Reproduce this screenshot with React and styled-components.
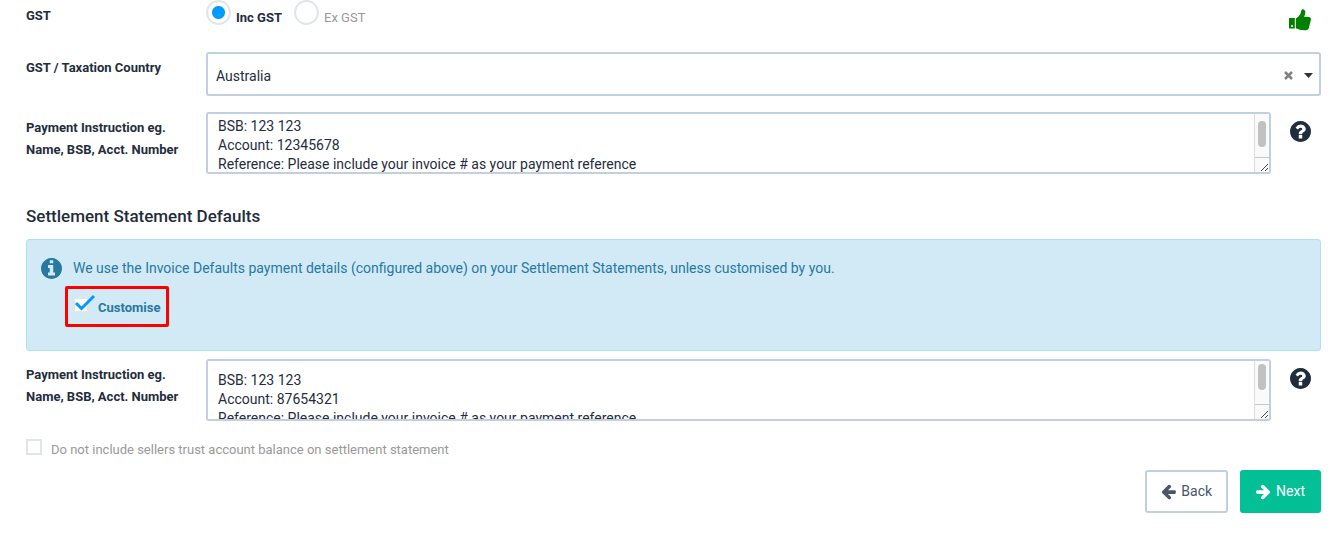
import React, { useLayoutEffect, useRef } from "react";
import styled, { createGlobalStyle, css } from "styled-components";

const ink = "#1f2d3d";
const line = "#c1cfde";
const blue = "#009bff";

const GlobalStyle = createGlobalStyle`
  *, *::before, *::after { box-sizing: border-box; }
  body {
    margin: 0;
    background: #fff;
    color: ${ink};
    font: 14px/19px Roboto, "Liberation Sans", sans-serif;
  }
  button, input, select, textarea { margin: 0; font: inherit; color: inherit; }
`;

const Form = styled.form`
  display: flex;
  flex-direction: column;
  padding: 0 23px 20px 26px;
`;

const Row = styled.div`
  display: grid;
  grid-template-columns: 180px 1fr ${(p) => (p.$aside ? "50px" : "")};
  margin-bottom: ${(p) => p.$gap || 0}px;
`;

const labelText = css`
  font-size: 13px;
  font-weight: 700;
  line-height: 22px;
`;

const Label = styled.label`
  ${labelText}
  padding-top: 5px;
`;

const Aside = styled.div`
  display: flex;
  justify-content: flex-end;
  align-items: flex-start;
  padding: 9px 10px 0 0;
`;

const IconButton = styled.button`
  display: flex;
  padding: 0;
  border: 0;
  background: none;
  cursor: pointer;
`;

const RadioGroup = styled.div`
  display: flex;
  gap: 12px;
`;

const RadioLabel = styled.label`
  display: flex;
  gap: 5px;
  font-size: 13px;
  line-height: 36px;
  height: 26px;
  color: ${(p) => (p.$on ? ink : "#999")};
  font-weight: ${(p) => (p.$on ? 700 : 400)};
`;

const Radio = styled.input`
  appearance: none;
  width: 25px;
  height: 25px;
  border: 2px solid #e0e6e8;
  border-radius: 50%;
  background: #fff;
  &:checked {
    background: radial-gradient(circle, ${blue} 6px, #fff 7px);
  }
`;

const SelectBox = styled.div`
  display: flex;
  align-items: center;
  height: 44px;
  padding: 2px 6px 0 0;
  border: 2px solid ${line};
  border-radius: 3px;
`;

const Select = styled.select`
  appearance: none;
  flex: 1;
  align-self: stretch;
  padding: 2px 8px 0;
  border: 0;
  background: none;
`;

const ClearButton = styled(IconButton)`
  margin-right: 11px;
`;

const ScrollField = styled.div`
  position: relative;
`;

const TextArea = styled.textarea`
  display: block;
  width: 100%;
  height: 62px;
  padding: 10px;
  border: 2px solid ${line};
  border-radius: 3px;
  resize: none;
  background: #fff;
  scrollbar-width: none;
`;

const ScrollTrack = styled.div`
  position: absolute;
  top: 2px;
  right: 2px;
  bottom: 2px;
  width: 15px;
  display: flex;
  flex-direction: column;
  justify-content: space-between;
  border-left: 1px solid #dcdcdc;
  background: #fafafa;
  pointer-events: none;
`;

const ScrollThumb = styled.div`
  width: 8px;
  height: 26px;
  margin: ${(p) => (p.$moved ? 7 : 3)}px 0 0 3px;
  border-radius: 4px;
  background: #c1c1c1;
`;

const Heading = styled.h2`
  margin: 30px 0 11px;
  font-size: 17px;
  font-weight: 500;
  line-height: 24px;
`;

const Notice = styled.section`
  display: flex;
  align-items: flex-start;
  gap: 11px;
  min-height: 112px;
  margin-bottom: 8px;
  padding: 18px 14px;
  border: 1px solid #aee3ec;
  border-radius: 3px;
  background: #d2eaf5;
  color: #2779a0;
`;

const NoticeBody = styled.div`
  display: flex;
  flex-direction: column;
  align-items: flex-start;
`;

const NoticeText = styled.p`
  margin: 0;
  line-height: 20px;
`;

const Customise = styled.label`
  ${labelText}
  position: relative;
  display: flex;
  align-items: center;
  height: 41px;
  margin: 8px 0 0 -8px;
  padding: 0 6px 5px 5px;
  gap: 3px;
  border: 3px solid #fe0000;
  border-radius: 2px;
`;

const HiddenCheck = styled.input`
  position: absolute;
  opacity: 0;
`;

const CustomiseText = styled.span`
  padding-top: 8px;
`;

const OptOut = styled.label`
  display: flex;
  gap: 9px;
  margin: 18px 0 9px;
  font-size: 13px;
  line-height: 22px;
  color: #999;
`;

const Check = styled.input`
  appearance: none;
  width: 16px;
  height: 16px;
  border: 2px solid #e0e6e8;
  background: #fff;
`;

const Actions = styled.div`
  display: flex;
  justify-content: flex-end;
  gap: 12px;
`;

const Button = styled.button`
  display: flex;
  align-items: center;
  gap: 5px;
  height: 43px;
  padding: 0 14px;
  border: 2px solid ${(p) => (p.$primary ? "#03bf95" : line)};
  border-radius: 3px;
  background: ${(p) => (p.$primary ? "#03bf95" : "#fff")};
  color: ${(p) => (p.$primary ? "#fff" : "#475669")};
  cursor: pointer;
`;

const ThumbIcon = () => (
  <svg width="22" height="22" viewBox="0 0 22 22" role="img" aria-label="Complete">
    <path
      fill="#008000"
      fillRule="evenodd"
      d="M0 9H5.800V19.500H0ZM3 16A1 1 0 1 0 3 18A1 1 0 1 0 3 16ZM6.800 9.500C9.500 8 11.700 5.500 12.200 2C12.500-.5 16-.4 16.300 2.800C16.400 5 15.500 6.500 15 7.700L20 8C21.800 8.200 22.200 9.600 21.700 11.500L20 18.500C19.600 20.500 18 21.300 15.800 21.300C12 21.300 9.500 20.500 6.800 19.300Z"
    />
  </svg>
);

const QuestionIcon = () => (
  <svg width="21" height="21" viewBox="0 0 1536 1536" aria-hidden="true">
    <path fill={ink} d="M896 1248v-192q0-14-9-23t-23-9H672q-14 0-23 9t-9 23v192q0 14 9 23t23 9h192q14 0 23-9t9-23zm256-672q0-88-55.500-163T958 297t-170-41q-243 0-371 213-15 24 8 42l132 100q7 6 19 6 16 0 25-12 53-68 86-92 34-24 86-24 48 0 85.500 26t37.500 59q0 38-20 61t-68 45q-63 28-115.500 86.500T640 892v36q0 14 9 23t23 9h192q14 0 23-9t9-23q0-19 21.500-49.500T972 829q32-18 49-28.500t46-35 44.500-48 28-60.500 12.500-81zm384 192q0 209-103 385.500T1153.500 1433 768 1536t-385.500-103T103 1153.500 0 768t103-385.500T382.500 103 768 0t385.500 103T1433 382.500 1536 768z" />
  </svg>
);

const InfoIcon = () => (
  <svg width="21" height="21" viewBox="0 0 1536 1536" aria-hidden="true">
    <path fill="currentColor" d="M1024 1248v-160q0-14-9-23t-23-9h-96V544q0-14-9-23t-23-9H544q-14 0-23 9t-9 23v160q0 14 9 23t23 9h96v320h-96q-14 0-23 9t-9 23v160q0 14 9 23t23 9h448q14 0 23-9t9-23zM896 352V192q0-14-9-23t-23-9H672q-14 0-23 9t-9 23v160q0 14 9 23t23 9h192q14 0 23-9t9-23zm640 416q0 209-103 385.500T1153.500 1433 768 1536t-385.500-103T103 1153.500 0 768t103-385.500T382.500 103 768 0t385.500 103T1433 382.500 1536 768z" />
  </svg>
);

const ArrowIcon = ({ right }) => (
  <svg width="15" height="16" viewBox="-20 -90 1576 1576" aria-hidden="true">
    <path
      transform={right ? "matrix(-1 0 0 1 1536 0)" : undefined}
      fill="currentColor"
      d="M1536 640v128q0 53-32.500 90.500t-84.500 37.500h-704l293 294q38 36 38 90t-38 90l-75 76q-37 37-90 37-52 0-91-37l-651-652q-37-37-37-90 0-52 37-91l651-650q38-38 91-38 52 0 90 38l75 74q38 38 38 91t-38 91l-293 293h704q52 0 84.500 37.500t32.500 90.500z"
    />
  </svg>
);

const ResizeGrip = () => (
  <svg width="14" height="15" viewBox="0 0 14 15" aria-hidden="true">
    <path d="M0 .5H14" stroke="#c8c8c8" />
    <path d="M6 14L13 7M10 14L13 11" stroke="#444" />
  </svg>
);

function Instructions({ id, value, scroll = 0 }) {
  const ref = useRef(null);
  useLayoutEffect(() => {
    ref.current.scrollTop = scroll;
  }, [scroll]);
  return (
    <Row $aside>
      <Label htmlFor={id}>
        Payment Instruction eg.
        <br />
        Name, BSB, Acct. Number
      </Label>
      <ScrollField>
        <TextArea id={id} ref={ref} defaultValue={value} />
        <ScrollTrack>
          <ScrollThumb $moved={scroll > 0} />
          <ResizeGrip />
        </ScrollTrack>
      </ScrollField>
      <Aside>
        <IconButton type="button" aria-label="Help">
          <QuestionIcon />
        </IconButton>
      </Aside>
    </Row>
  );
}

export default function App() {
  return (
    <>
      <GlobalStyle />
      <Form onSubmit={(e) => e.preventDefault()}>
        <Row $aside $gap={21}>
          <Label as="span">GST</Label>
          <RadioGroup role="radiogroup" aria-label="GST">
            <RadioLabel $on>
              <Radio type="radio" name="gst" defaultChecked />
              Inc GST
            </RadioLabel>
            <RadioLabel>
              <Radio type="radio" name="gst" />
              Ex GST
            </RadioLabel>
          </RadioGroup>
          <Aside>
            <ThumbIcon />
          </Aside>
        </Row>
        <Row $gap={16}>
          <Label htmlFor="country">GST / Taxation Country</Label>
          <SelectBox>
            <Select id="country" defaultValue="Australia">
              <option>Australia</option>
            </Select>
            <ClearButton type="button" aria-label="Clear country">
              <svg width="9" height="9" viewBox="0 0 9 9">
                <path d="M1 1L8 8M8 1L1 8" stroke="#808080" strokeWidth="2.500" />
              </svg>
            </ClearButton>
            <svg width="9" height="5" viewBox="0 0 9 5" aria-hidden="true">
              <path d="M0 0H9L4.500 5Z" fill="#333" />
            </svg>
          </SelectBox>
        </Row>
        <Instructions
          id="invoice-payment"
          scroll={7}
          value={"BSB: 123 123\nAccount: 12345678\nReference: Please include your invoice # as your payment reference\n"}
        />
        <Heading>Settlement Statement Defaults</Heading>
        <Notice>
          <InfoIcon />
          <NoticeBody>
            <NoticeText>
              We use the Invoice Defaults payment details (configured above) on your Settlement Statements, unless customised by you.
            </NoticeText>
            <Customise>
              <HiddenCheck type="checkbox" defaultChecked />
              <svg width="22" height="20" viewBox="0 0 22 20" aria-hidden="true">
                <rect x="1" y="4" width="14" height="14" fill="#fff" stroke="#e0e6e8" strokeWidth="2" />
                <path d="M3 9L8.500 14.500L21 2" fill="none" stroke={blue} strokeWidth="3" />
              </svg>
              <CustomiseText>Customise</CustomiseText>
            </Customise>
          </NoticeBody>
        </Notice>
        <Instructions
          id="settlement-payment"
          value={"BSB: 123 123\nAccount: 87654321\nReference: Please include your invoice # as your payment reference\n"}
        />
        <OptOut>
          <Check type="checkbox" />
          Do not include sellers trust account balance on settlement statement
        </OptOut>
        <Actions>
          <Button type="button">
            <ArrowIcon />
            Back
          </Button>
          <Button type="submit" $primary>
            <ArrowIcon right />
            Next
          </Button>
        </Actions>
      </Form>
    </>
  );
}
